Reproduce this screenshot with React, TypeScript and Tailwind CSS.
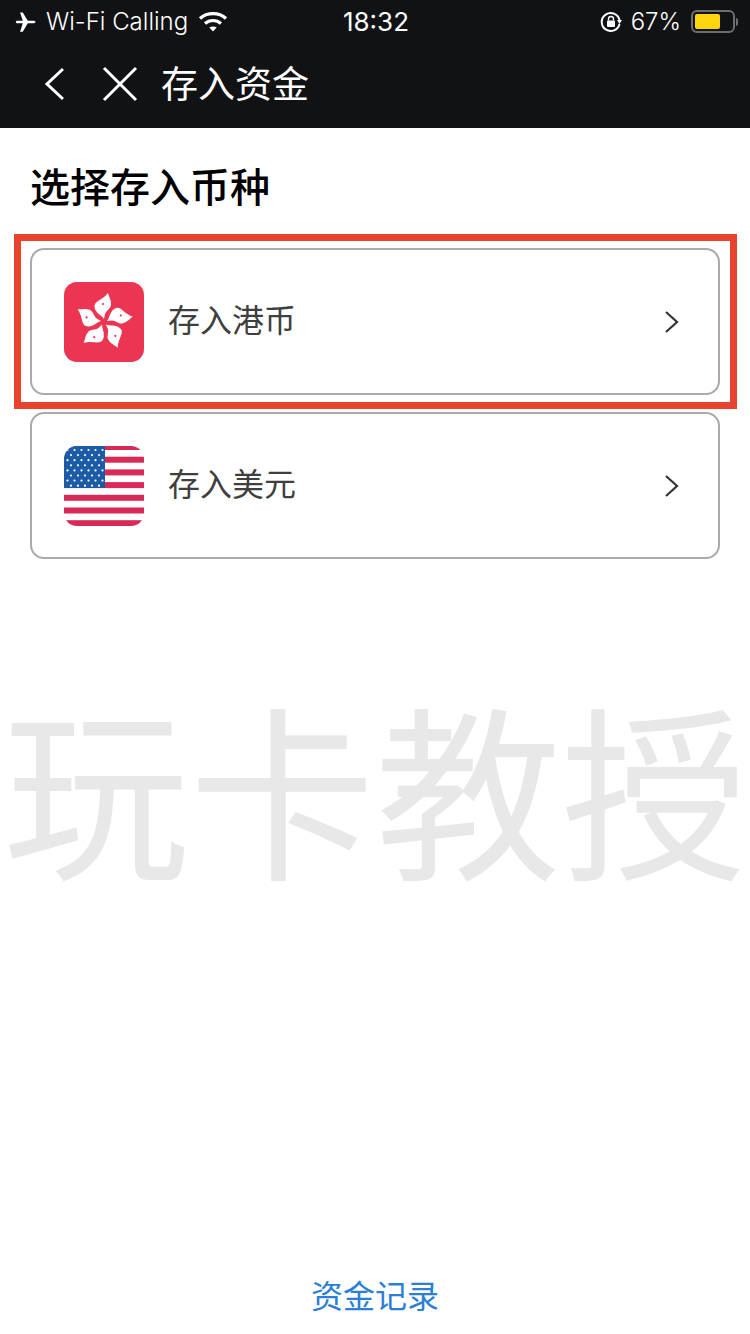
const cjk = "font-['Inter','Noto_Sans_CJK_SC',sans-serif]";

function HkFlag() {
  const petal = "M0 -3 C-2 -7 -9.5 -9 -9.5 -16 C-9.5 -21 -1 -22 4 -29 C5 -25 7.5 -22 7 -17 C6.5 -13 2.5 -12 1 -8 C0.5 -6 0.3 -4.5 0 -3 Z";
  return (
    <svg width="80" height="80" viewBox="-40 -40 80 80" className="shrink-0">
      <rect x="-40" y="-40" width="80" height="80" rx="13" fill="#ec3553" />
      {[0, 72, 144, 216, 288].map((a) => (
        <g key={a} transform={`rotate(${a})`}>
          <path d={petal} fill="#ffffff" />
          <circle cx="-1" cy="-18" r="1.1" fill="#ec3553" />
        </g>
      ))}
    </svg>
  );
}

function UsFlag() {
  const stripes = [0, 1, 2, 3, 4, 5, 6];
  const stars: [number, number][] = [];
  for (let r = 0; r < 8; r++) {
    for (let c = 0; c < (r % 2 ? 5 : 6); c++) {
      stars.push([(r % 2 ? 7 : 3.5) + c * 7, 4 + r * 5.1]);
    }
  }
  return (
    <svg width="80" height="80" viewBox="0 0 80 80" className="shrink-0">
      <defs>
        <clipPath id="usflag">
          <rect width="80" height="80" rx="13" />
        </clipPath>
      </defs>
      <g clipPath="url(#usflag)">
        <rect width="80" height="80" fill="#ffffff" />
        {stripes.map((i) => (
          <rect key={i} x="0" y={i * 12.7 - 2} width="80" height="6" fill="#d92a57" />
        ))}
        <rect width="41" height="42" fill="#1c5ba6" />
        {stars.map(([x, y]) => (
          <circle key={`${x}-${y}`} cx={x} cy={y} r="1.1" fill="#ffffff" />
        ))}
      </g>
    </svg>
  );
}

function Chevron() {
  return (
    <svg width="16" height="24" viewBox="0 0 16 24" className="shrink-0" fill="none" stroke="#333333" strokeWidth="2.2">
      <path d="M2 2 L13 12 L2 22" />
    </svg>
  );
}

function CurrencyRow({ flag, label }: { flag: React.ReactNode; label: string }) {
  return (
    <div className="flex h-[147px] items-center rounded-[14px] border-2 border-[#aaaaaa] bg-white pl-[32px] pr-[38px]">
      {flag}
      <span className="ml-[24px] flex-1 pb-[2px] text-[32px] leading-none text-[#3f3f3f]">{label}</span>
      <Chevron />
    </div>
  );
}

function StatusBar() {
  return (
    <div className="flex h-[42px] items-center justify-between pt-[1px] pl-[14px] pr-[12px] text-[24px] leading-none text-white">
      <div className="flex w-[300px] items-center">
        <svg width="22" height="22" viewBox="0 0 24 24" fill="#ffffff">
          <path d="M2 12 C2 11 3 10.6 4 10.6 L9.6 10.6 L6.6 1.5 L9.6 1.5 L15 10.6 L20.5 10.6 C22 10.6 23.5 11 23.5 12 C23.5 13 22 13.4 20.5 13.4 L15 13.4 L9.6 22.5 L6.6 22.5 L9.6 13.4 L4 13.4 C3 13.4 2 13 2 12 Z" />
        </svg>
        <span className="ml-[10px] font-['Inter',sans-serif] font-light">Wi-Fi Calling</span>
        <svg width="30" height="22" viewBox="0 0 30 22" fill="none" stroke="#ffffff" strokeWidth="3.2" className="ml-[10px]">
          <path d="M2 7.5 C9 1 21 1 28 7.5" />
          <path d="M7 12.5 C11.5 8.5 18.5 8.5 23 12.5" />
          <path d="M15 20.5 L11.3 16.6 C13.3 15 16.7 15 18.7 16.6 Z" fill="#ffffff" stroke="none" />
        </svg>
      </div>
      <span className="text-[26px] font-['Inter',sans-serif] font-normal">18:32</span>
      <div className="flex w-[300px] items-center justify-end">
        <svg width="22" height="22" viewBox="0 0 22 22" fill="none" stroke="#ffffff" strokeWidth="2">
          <path d="M19.5 9 A9 9 0 1 0 19.5 13" />
          <path d="M17 9 L22 9 L19.5 13 Z" fill="#ffffff" stroke="none" />
          <rect x="7" y="9.5" width="8" height="6.5" rx="1" fill="#ffffff" stroke="none" />
          <path d="M8.5 9.5 V8 A2.5 2.5 0 0 1 13.5 8 V9.5" strokeWidth="1.4" />
        </svg>
        <span className="ml-[9px] font-['Inter',sans-serif] font-light">67%</span>
        <div className="ml-[10px] flex h-[23px] w-[44px] items-center rounded-[6px] border-2 border-[#6e6e70] p-[2px]">
          <div className="h-[15px] w-[25px] rounded-[2px] bg-[#fdd60f]" />
        </div>
        <div className="ml-[1px] h-[8px] w-[2px] rounded-r-sm bg-[#6e6e70]" />
      </div>
    </div>
  );
}

export default function App() {
  return (
    <div className={`relative flex h-[1334px] w-[750px] flex-col overflow-hidden bg-white ${cjk}`}>
      <header className="h-[128px] bg-[#111214]">
        <StatusBar />
        <div className="flex h-[86px] items-center pb-[2px] pl-[44px]">
          <svg width="22" height="34" viewBox="0 0 22 34" fill="none" stroke="#ffffff" strokeWidth="3">
            <path d="M19 2 L3 17 L19 32" />
          </svg>
          <svg width="36" height="36" viewBox="0 0 36 36" fill="none" stroke="#ffffff" strokeWidth="3" className="ml-[36px]">
            <path d="M2 2 L34 34 M34 2 L2 34" />
          </svg>
          <h1 className="ml-[23px] text-[37px] leading-none font-normal text-white">存入资金</h1>
        </div>
      </header>

      <main className="flex flex-1 flex-col px-[30px]">
        <h2 className="mt-[40px] text-[40px] leading-none font-medium text-black">选择存入币种</h2>
        <div className="mt-[40px] flex flex-col gap-[17px]">
          <CurrencyRow flag={<HkFlag />} label="存入港币" />
          <CurrencyRow flag={<UsFlag />} label="存入美元" />
        </div>
        <div className="mt-auto pb-[21px] text-center text-[32px] leading-none text-[#2b7fd4]">资金记录</div>
      </main>

      {/* annotation and watermark added on top of the screenshot */}
      <div className="absolute top-[234px] left-[14px] h-[175px] w-[723px] border-[7px] border-[#e8432c]" />
      <div className="pointer-events-none absolute top-[706px] left-[0px] w-[750px] text-center text-[186px] leading-none whitespace-nowrap text-[#e8e8e8]">
        玩卡教授
      </div>
    </div>
  );
}
